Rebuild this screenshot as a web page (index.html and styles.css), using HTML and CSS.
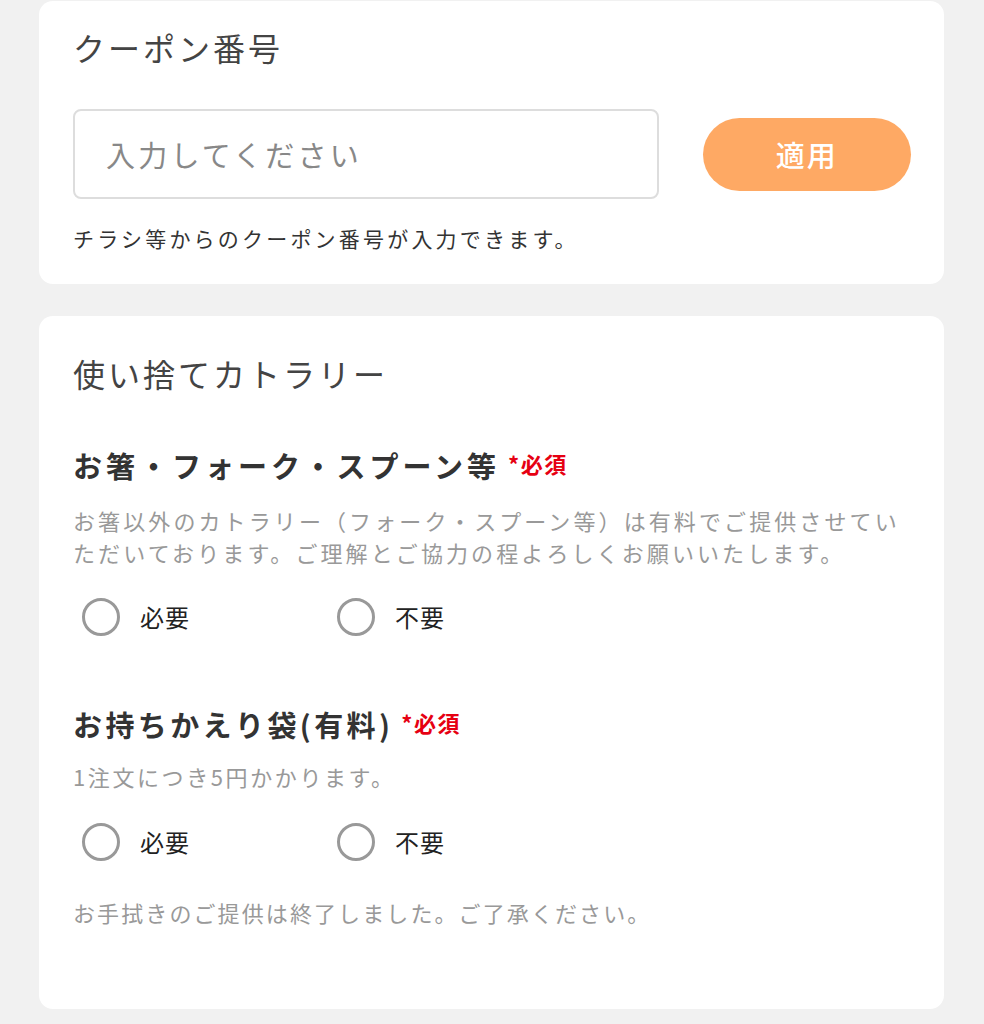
FILE: index.html
```html
<!DOCTYPE html>
<html lang="ja">
<head>
    <meta charset="UTF-8">
    <meta name="viewport" content="width=device-width, initial-scale=1.0">
    <title>注文オプション</title>
    <link rel="stylesheet" href="styles.css">
</head>
<body>
    <div class="page">
        <!-- クーポン -->
        <section class="card coupon-card">
            <h2 class="card-title">クーポン番号</h2>
            <div class="coupon-row">
                <input class="coupon-input" type="text" placeholder="入力してください">
                <button class="apply-button">適用</button>
            </div>
            <p class="coupon-note">チラシ等からのクーポン番号が入力できます。</p>
        </section>

        <!-- カトラリー -->
        <section class="card cutlery-card">
            <h2 class="card-title">使い捨てカトラリー</h2>

            <div class="field first-field">
                <h3 class="field-title">お箸・フォーク・スプーン等<span class="required">*必須</span></h3>
                <p class="field-desc">お箸以外のカトラリー（フォーク・スプーン等）は有料でご提供させていただいております。ご理解とご協力の程よろしくお願いいたします。</p>
                <div class="radio-row">
                    <label class="radio"><span class="radio-circle"></span>必要</label>
                    <label class="radio"><span class="radio-circle"></span>不要</label>
                </div>
            </div>

            <div class="field second-field">
                <h3 class="field-title">お持ちかえり袋(有料)<span class="required">*必須</span></h3>
                <p class="field-desc">1注文につき5円かかります。</p>
                <div class="radio-row">
                    <label class="radio"><span class="radio-circle"></span>必要</label>
                    <label class="radio"><span class="radio-circle"></span>不要</label>
                </div>
            </div>

            <p class="field-desc end-note">お手拭きのご提供は終了しました。ご了承ください。</p>
        </section>
    </div>
</body>
</html>
```

FILE: styles.css
```css
body {
    margin: 0;
    padding: 0;
    background: #f1f1f1;
    font-family: "Noto Sans CJK JP", "Noto Sans", sans-serif;
    color: #333;
}

.page {
    width: 905px;
    margin: 0 auto 0 39px;
    padding-top: 1px;
    display: flex;
    flex-direction: column;
    gap: 32px;
}

.card {
    background: #fff;
    border-radius: 14px;
    padding: 24px 33px 31px 34px;
}

.card-title {
    margin: 0;
    font-size: 32px;
    font-weight: 400;
    line-height: 44px;
    letter-spacing: 3px;
    color: #444;
}

/* coupon */
.coupon-row {
    display: flex;
    align-items: center;
    margin-top: 40px;
}

.coupon-input {
    width: 587px;
    height: 90px;
    box-sizing: border-box;
    border: 2px solid #ddd;
    border-radius: 8px;
    padding: 0 31px;
    font-family: inherit;
    font-size: 29px;
    letter-spacing: 3.2px;
    color: #333;
    outline: none;
}

.coupon-input::placeholder {
    color: #888;
}

.apply-button {
    margin-left: 44px;
    width: 209px;
    height: 73px;
    border: none;
    border-radius: 37px;
    background: #fea964;
    color: #fff;
    font-family: inherit;
    font-size: 29px;
    font-weight: 500;
    letter-spacing: 2px;
    cursor: pointer;
}

.coupon-note {
    margin: 24px 0 0;
    font-size: 21px;
    line-height: 30px;
    letter-spacing: 3.2px;
    color: #333;
}

/* cutlery */
.cutlery-card {
    padding-top: 35px;
    padding-bottom: 81px;
}

.first-field {
    margin-top: 48px;
}

.second-field {
    margin-top: 67px;
}

.field-title {
    margin: 0;
    font-size: 29px;
    font-weight: 700;
    line-height: 40px;
    letter-spacing: 4px;
    color: #333;
}

.second-field .field-title {
    letter-spacing: 3.4px;
}

.required {
    margin-left: 8px;
    font-size: 22px;
    font-weight: 700;
    color: #e60012;
    letter-spacing: 1.5px;
    vertical-align: 5px;
}

.field-desc {
    margin: 19px 0 0;
    font-size: 22px;
    line-height: 32px;
    letter-spacing: 3.1px;
    color: #999;
}

.second-field .field-desc {
    margin-top: 16px;
    letter-spacing: 2.6px;
}

.radio-row {
    display: flex;
    margin-top: 31px;
}

.second-field .radio-row {
    margin-top: 32px;
}

.radio {
    display: flex;
    align-items: center;
    width: 255px;
    height: 36px;
    padding-left: 9px;
    box-sizing: border-box;
    font-size: 24px;
    line-height: 36px;
    letter-spacing: 1px;
    color: #222;
}

.radio-circle {
    width: 32px;
    height: 32px;
    border: 3px solid #999;
    border-radius: 50%;
    margin-right: 20px;
    flex-shrink: 0;
}

.end-note {
    margin-top: 36px;
    letter-spacing: 2.1px;
}
```
